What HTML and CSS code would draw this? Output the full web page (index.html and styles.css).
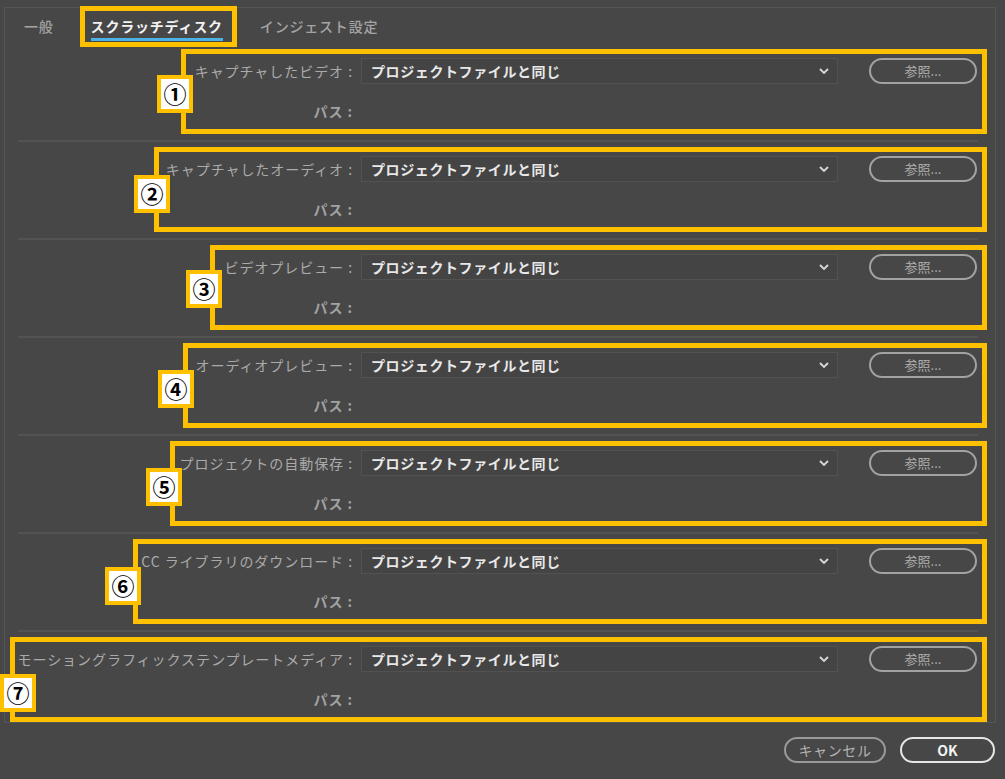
FILE: index.html
```html
<!DOCTYPE html>
<html lang="ja">
<head>
<meta charset="utf-8">
<title>スクラッチディスク</title>
<link rel="stylesheet" href="styles.css">
</head>
<body>
<div class="panel">
  <div class="tabs">
    <span class="tab">一般</span>
    <span class="tab-mark"><span class="tab active">スクラッチディスク</span></span>
    <span class="tab tab-last">インジェスト設定</span>
  </div>

  <div class="section">
    <div class="note n1">
      <span class="badge">①</span>
      <span class="label">キャプチャしたビデオ :</span>
      <div class="select"><span>プロジェクトファイルと同じ</span><svg class="chev" width="10" height="6" viewBox="0 0 10 6"><path d="M1 1 L5 5 L9 1" fill="none" stroke="#d8d8d8" stroke-width="1.8"/></svg></div>
      <button class="browse">参照...</button>
      <span class="label path">パス :</span>
    </div>
  </div>
  <div class="sep"></div>

  <div class="section">
    <div class="note n2">
      <span class="badge">②</span>
      <span class="label">キャプチャしたオーディオ :</span>
      <div class="select"><span>プロジェクトファイルと同じ</span><svg class="chev" width="10" height="6" viewBox="0 0 10 6"><path d="M1 1 L5 5 L9 1" fill="none" stroke="#d8d8d8" stroke-width="1.8"/></svg></div>
      <button class="browse">参照...</button>
      <span class="label path">パス :</span>
    </div>
  </div>
  <div class="sep"></div>

  <div class="section">
    <div class="note n3">
      <span class="badge">③</span>
      <span class="label">ビデオプレビュー :</span>
      <div class="select"><span>プロジェクトファイルと同じ</span><svg class="chev" width="10" height="6" viewBox="0 0 10 6"><path d="M1 1 L5 5 L9 1" fill="none" stroke="#d8d8d8" stroke-width="1.8"/></svg></div>
      <button class="browse">参照...</button>
      <span class="label path">パス :</span>
    </div>
  </div>
  <div class="sep"></div>

  <div class="section">
    <div class="note n4">
      <span class="badge">④</span>
      <span class="label">オーディオプレビュー :</span>
      <div class="select"><span>プロジェクトファイルと同じ</span><svg class="chev" width="10" height="6" viewBox="0 0 10 6"><path d="M1 1 L5 5 L9 1" fill="none" stroke="#d8d8d8" stroke-width="1.8"/></svg></div>
      <button class="browse">参照...</button>
      <span class="label path">パス :</span>
    </div>
  </div>
  <div class="sep"></div>

  <div class="section">
    <div class="note n5">
      <span class="badge">⑤</span>
      <span class="label">プロジェクトの自動保存 :</span>
      <div class="select"><span>プロジェクトファイルと同じ</span><svg class="chev" width="10" height="6" viewBox="0 0 10 6"><path d="M1 1 L5 5 L9 1" fill="none" stroke="#d8d8d8" stroke-width="1.8"/></svg></div>
      <button class="browse">参照...</button>
      <span class="label path">パス :</span>
    </div>
  </div>
  <div class="sep"></div>

  <div class="section">
    <div class="note n6">
      <span class="badge">⑥</span>
      <span class="label">CC ライブラリのダウンロード :</span>
      <div class="select"><span>プロジェクトファイルと同じ</span><svg class="chev" width="10" height="6" viewBox="0 0 10 6"><path d="M1 1 L5 5 L9 1" fill="none" stroke="#d8d8d8" stroke-width="1.8"/></svg></div>
      <button class="browse">参照...</button>
      <span class="label path">パス :</span>
    </div>
  </div>
  <div class="sep"></div>

  <div class="section last">
    <div class="note n7">
      <span class="badge">⑦</span>
      <span class="label">モーショングラフィックステンプレートメディア :</span>
      <div class="select"><span>プロジェクトファイルと同じ</span><svg class="chev" width="10" height="6" viewBox="0 0 10 6"><path d="M1 1 L5 5 L9 1" fill="none" stroke="#d8d8d8" stroke-width="1.8"/></svg></div>
      <button class="browse">参照...</button>
      <span class="label path">パス :</span>
    </div>
  </div>
</div>

<div class="footer">
  <button class="btn cancel">キャンセル</button>
  <button class="btn ok">OK</button>
</div>
</body>
</html>
```

FILE: styles.css
```css
* { box-sizing: border-box; }

html, body {
  margin: 0;
  padding: 0;
  background: #474747;
  width: 1005px;
  height: 779px;
  overflow: hidden;
  font-family: "Noto Sans CJK JP", "Noto Sans", sans-serif;
  font-size: 14px;
  color: #a8a8a8;
}

body { padding-top: 7px; }

.panel {
  margin-left: 4px;
  width: 992px;
  border: 1px solid #555555;
}

/* tabs */
.tabs {
  display: flex;
  align-items: flex-start;
  height: 41px;
  margin-top: -2px;
  margin-bottom: -3px;
  padding-left: 19px;
  position: relative;
  z-index: 2;
}

.tab {
  padding-top: 10px;
  line-height: 20px;
  letter-spacing: 0.8px;
  color: #a4a4a4;
  font-weight: 500;
  white-space: nowrap;
}

.tab-mark {
  margin-left: 26px;
  border: 5px solid #ffc000;
  padding: 0 9px 1px 6px;
}

.tab.active {
  display: block;
  padding: 5px 0 2px;
  color: #f2f2f2;
  font-weight: 700;
  border-bottom: 3px solid #4db3e6;
}

.tab-last { margin-left: 23px; }

/* sections */
.section {
  height: 96px;
  padding-top: 5px;
  display: flex;
}

.section.last { height: auto; }

.sep {
  height: 2px;
  margin: 0 17px 0 13px;
  background: #535353;
}

.note {
  position: relative;
  flex: 1;
  margin-right: 8px;
  height: 85px;
  border: 5px solid #ffc000;
  padding: 4px 5px 5px 0;
  display: grid;
  grid-template-columns: 1fr 477px 139px;
  grid-template-rows: 26px 26px;
  row-gap: 14px;
  align-items: center;
}

.n1 { margin-left: 176px; --bx: -24px; --by: 2px; }
.n2 { margin-left: 149px; --bx: -20px; --by: 4px; }
.n3 { margin-left: 205px; --bx: -24px; --by: 1px; }
.n4 { margin-left: 178px; --bx: -25px; --by: 3px; }
.n5 { margin-left: 165px; --bx: -24px; --by: 3px; }
.n6 { margin-left: 128px; --bx: -28px; --by: 4px; }
.n7 { margin-left: 5px;   --bx: -10px; --by: 13px; }

.badge {
  position: absolute;
  left: calc(var(--bx) - 5px);
  top: calc(50% - 19px + var(--by));
  width: 36px;
  height: 38px;
  border: 4px solid #ffc000;
  background: #ffffff;
  color: #000000;
  display: flex;
  align-items: center;
  justify-content: center;
  font-size: 23px;
  line-height: 1;
  font-weight: 700;
  z-index: 3;
}

.label {
  grid-column: 1;
  text-align: right;
  padding-right: 8px;
  white-space: nowrap;
  letter-spacing: 0.95px;
  color: #aaaaaa;
  line-height: 20px;
}

.label.path {
  grid-row: 2;
  font-weight: 700;
  color: #a2a2a2;
}

.select {
  grid-column: 2;
  height: 26px;
  background: #444444;
  border: 1px solid #525252;
  display: flex;
  align-items: center;
  justify-content: space-between;
  padding: 0 8px 0 9px;
  color: #e8e8e8;
  font-weight: 700;
  letter-spacing: 0.6px;
}

.chev { display: block; }

.browse {
  grid-column: 3;
  justify-self: end;
  width: 108px;
  height: 26px;
  border: 2px solid #a2a2a2;
  border-radius: 13px;
  background: transparent;
  color: #aeaeae;
  font-family: inherit;
  font-size: 13px;
  padding: 0;
  line-height: 20px;
}

/* footer */
.footer {
  margin-top: 14px;
  display: flex;
  justify-content: flex-end;
  gap: 14px;
  padding-right: 10px;
}

.btn {
  height: 26px;
  border-radius: 13px;
  background: transparent;
  font-family: inherit;
  font-size: 14px;
  padding: 0;
  line-height: 20px;
}

.cancel {
  width: 102px;
  border: 2px solid #9a9a9a;
  color: #b2b2b2;
  letter-spacing: 0.6px;
}

.ok {
  width: 95px;
  border: 2px solid #e6e6e6;
  color: #f4f4f4;
  font-weight: 700;
}
```
